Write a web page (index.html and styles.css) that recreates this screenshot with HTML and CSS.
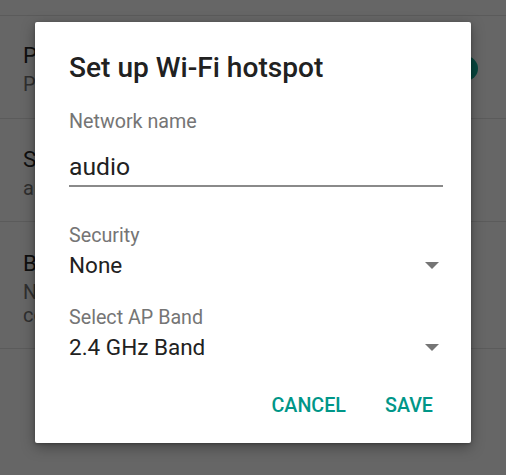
FILE: index.html
```html
<!DOCTYPE html>
<html>
<head>
<meta charset="utf-8">
<link rel="stylesheet" href="styles.css">
</head>
<body>
<div class="screen">
  <div class="list">
    <div class="row row-1">
      <div class="row-text">
        <div class="row-title">Portable Wi-Fi hotspot</div>
        <div class="row-sub">Portable hotspot audio active</div>
      </div>
      <div class="switch-thumb"></div>
    </div>
    <div class="row row-2">
      <div class="row-text">
        <div class="row-title">Set up Wi-Fi hotspot</div>
        <div class="row-sub">audio Portable Wi-Fi hotspot</div>
      </div>
    </div>
    <div class="row row-3">
      <div class="row-text">
        <div class="row-title">Bluetooth tethering</div>
        <div class="row-sub">Not sharing this phone's</div>
        <div class="row-sub row-sub-2">connection</div>
      </div>
    </div>
  </div>

  <div class="dialog">
    <div class="dialog-title">Set up Wi-Fi hotspot</div>
    <div class="field-label label-first">Network name</div>
    <div class="text-input">audio</div>
    <div class="field-label label-security">Security</div>
    <div class="spinner">
      <span class="spinner-value">None</span>
      <span class="arrow"></span>
    </div>
    <div class="field-label label-band">Select AP Band</div>
    <div class="spinner">
      <span class="spinner-value">2.4 GHz Band</span>
      <span class="arrow"></span>
    </div>
    <div class="actions">
      <span class="btn btn-cancel">CANCEL</span>
      <span class="btn">SAVE</span>
    </div>
  </div>
</div>
</body>
</html>
```

FILE: styles.css
```css
html, body {
  margin: 0;
  padding: 0;
}
body {
  width: 506px;
  height: 475px;
  overflow: hidden;
  background: #666666;
  font-family: Roboto, "Noto Sans", "Liberation Sans", sans-serif;
}
.screen {
  position: relative;
  width: 506px;
  height: 475px;
}
.list {
  padding-top: 15px;
}
.row {
  display: flex;
  align-items: flex-start;
  border-top: 1px solid #5b5b5b;
  box-sizing: border-box;
  padding-left: 23px;
}
.row-1 { height: 103px; padding-top: 24px; }
.row-2 { height: 103px; padding-top: 25px; }
.row-3 { height: 128px; padding-top: 26px; border-bottom: 1px solid #5b5b5b; }
.row-text {
  flex: 1;
  max-width: 380px;
}
.row-title {
  font-size: 22.5px;
  line-height: 30px;
  color: #0f0f0f;
}
.row-sub {
  font-size: 20px;
  line-height: 23px;
  margin-top: 3px;
  color: #2f2f2f;
}
.row-sub-2 {
  margin-top: 0;
}
.switch-thumb {
  width: 25px;
  height: 25px;
  border-radius: 50%;
  background: #07463e;
  margin-left: auto;
  margin-right: 28px;
  margin-top: 16px;
}

.dialog {
  position: absolute;
  left: 35px;
  top: 22px;
  width: 436px;
  height: 421px;
  box-sizing: border-box;
  background: #ffffff;
  border-radius: 2px;
  box-shadow: 0 4px 14px rgba(0, 0, 0, 0.35), 0 1px 3px rgba(0, 0, 0, 0.25);
  padding: 28px 28px 0 34px;
}
.dialog-title {
  font-size: 28.1px;
  font-weight: 500;
  line-height: 36px;
  color: #212121;
}
.field-label {
  font-size: 19.7px;
  line-height: 24px;
  color: #757575;
}
.label-first { margin-top: 24px; }
.label-security { margin-top: 37px; }
.label-band { margin-top: 27px; }
.text-input {
  margin-top: 18px;
  font-size: 24.7px;
  line-height: 30px;
  color: #212121;
  padding-bottom: 3px;
  border-bottom: 2px solid #8a8a8a;
}
.spinner {
  display: flex;
  align-items: center;
  justify-content: space-between;
  margin-top: 3px;
  height: 28px;
}
.spinner-value {
  font-size: 22.5px;
  line-height: 28px;
  color: #212121;
}
.arrow {
  width: 0;
  height: 0;
  border-left: 7px solid transparent;
  border-right: 7px solid transparent;
  border-top: 7px solid #757575;
  margin-right: 4px;
}
.actions {
  display: flex;
  justify-content: flex-end;
  margin-top: 33px;
  margin-right: -1px;
}
.btn {
  font-size: 19.7px;
  font-weight: 500;
  line-height: 24px;
  color: #009688;
  padding: 0 11px;
}
.btn-cancel {
  margin-right: 17px;
}
```
